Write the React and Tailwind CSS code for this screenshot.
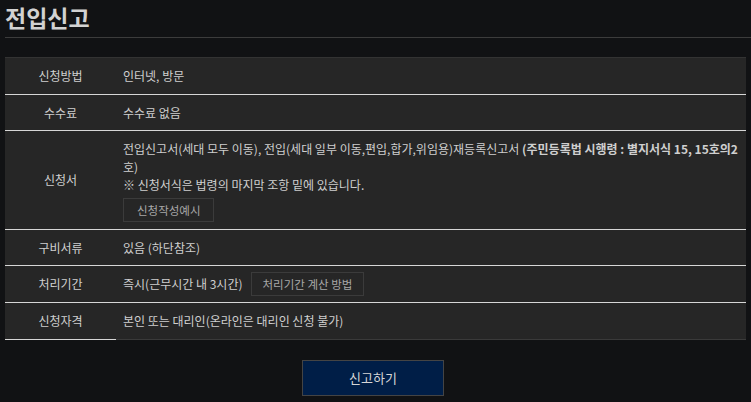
const font = { fontFamily: '"Noto Sans CJK KR", "Noto Sans", sans-serif' };

function Row({ label, children, last, className = "" }) {
    return (
        <div className="flex">
            <div
                className={`w-[111px] shrink-0 flex items-center justify-center border-b border-[#d6d6d6] ${className}`}
            >
                {label}
            </div>
            <div
                className={`flex-1 pl-[7px] pr-[6px] flex flex-col justify-center border-b ${
                    last ? "border-[#3a3a3a]" : "border-[#d6d6d6]"
                } ${className}`}
            >
                {children}
            </div>
        </div>
    );
}

function SmallBtn({ children, wide }) {
    return (
        <span
            className={`inline-flex items-center h-[24px] ${
                wide ? "px-[13px]" : "px-[11px]"
            } border border-[#3b3b3b] text-[11.5px] text-[#a8a8a8]`}
        >
            {children}
        </span>
    );
}

export default function App() {
    return (
        <div
            className="w-[751px] h-[402px] bg-[#111214] text-[#cfcfcf] overflow-hidden"
            style={font}
        >
            <div className="pl-[5px]">
                <div className="h-[37px]">
                    <h1 className="text-[23px] font-bold leading-[34px] text-[#d2d2d2]">
                        전입신고
                    </h1>
                </div>
                <div className="border-t border-[#3c3c3c]" />
            </div>

            <div className="mt-[19px] ml-[5px] w-[741px] bg-[#262626] border-t border-[#333333] text-[12px] leading-[18px]">
                <Row label="신청방법" className="h-[37px]">
                    인터넷, 방문
                </Row>
                <Row label="수수료" className="h-[36px]">
                    수수료 없음
                </Row>
                <Row label="신청서" className="h-[99px]">
                    <div className="pt-[1px]">
                        전입신고서(세대 모두 이동), 전입(세대 일부 이동,편입,합가,위임용)재등록신고서{" "}
                        <b className="font-bold">(주민등록법 시행령 : 별지서식 15, 15호의2</b>호)
                    </div>
                    <div>※ 신청서식은 법령의 마지막 조항 밑에 있습니다.</div>
                    <div className="mt-[4px]">
                        <SmallBtn wide>신청작성예시</SmallBtn>
                    </div>
                </Row>
                <Row label="구비서류" className="h-[36px]">
                    있음 (하단참조)
                </Row>
                <Row label="처리기간" className="h-[37px]">
                    <div className="flex items-center gap-[8px]">
                        <span>즉시(근무시간 내 3시간)</span>
                        <SmallBtn>처리기간 계산 방법</SmallBtn>
                    </div>
                </Row>
                <Row label="신청자격" className="h-[37px]" last>
                    본인 또는 대리인(온라인은 대리인 신청 불가)
                </Row>
            </div>

            <div className="flex justify-center mt-[20px] pr-[5px]">
                <button className="w-[142px] h-[36px] bg-[#001e47] border border-[#444444] text-[13px] text-[#d6d6d6]">
                    신고하기
                </button>
            </div>
        </div>
    );
}
